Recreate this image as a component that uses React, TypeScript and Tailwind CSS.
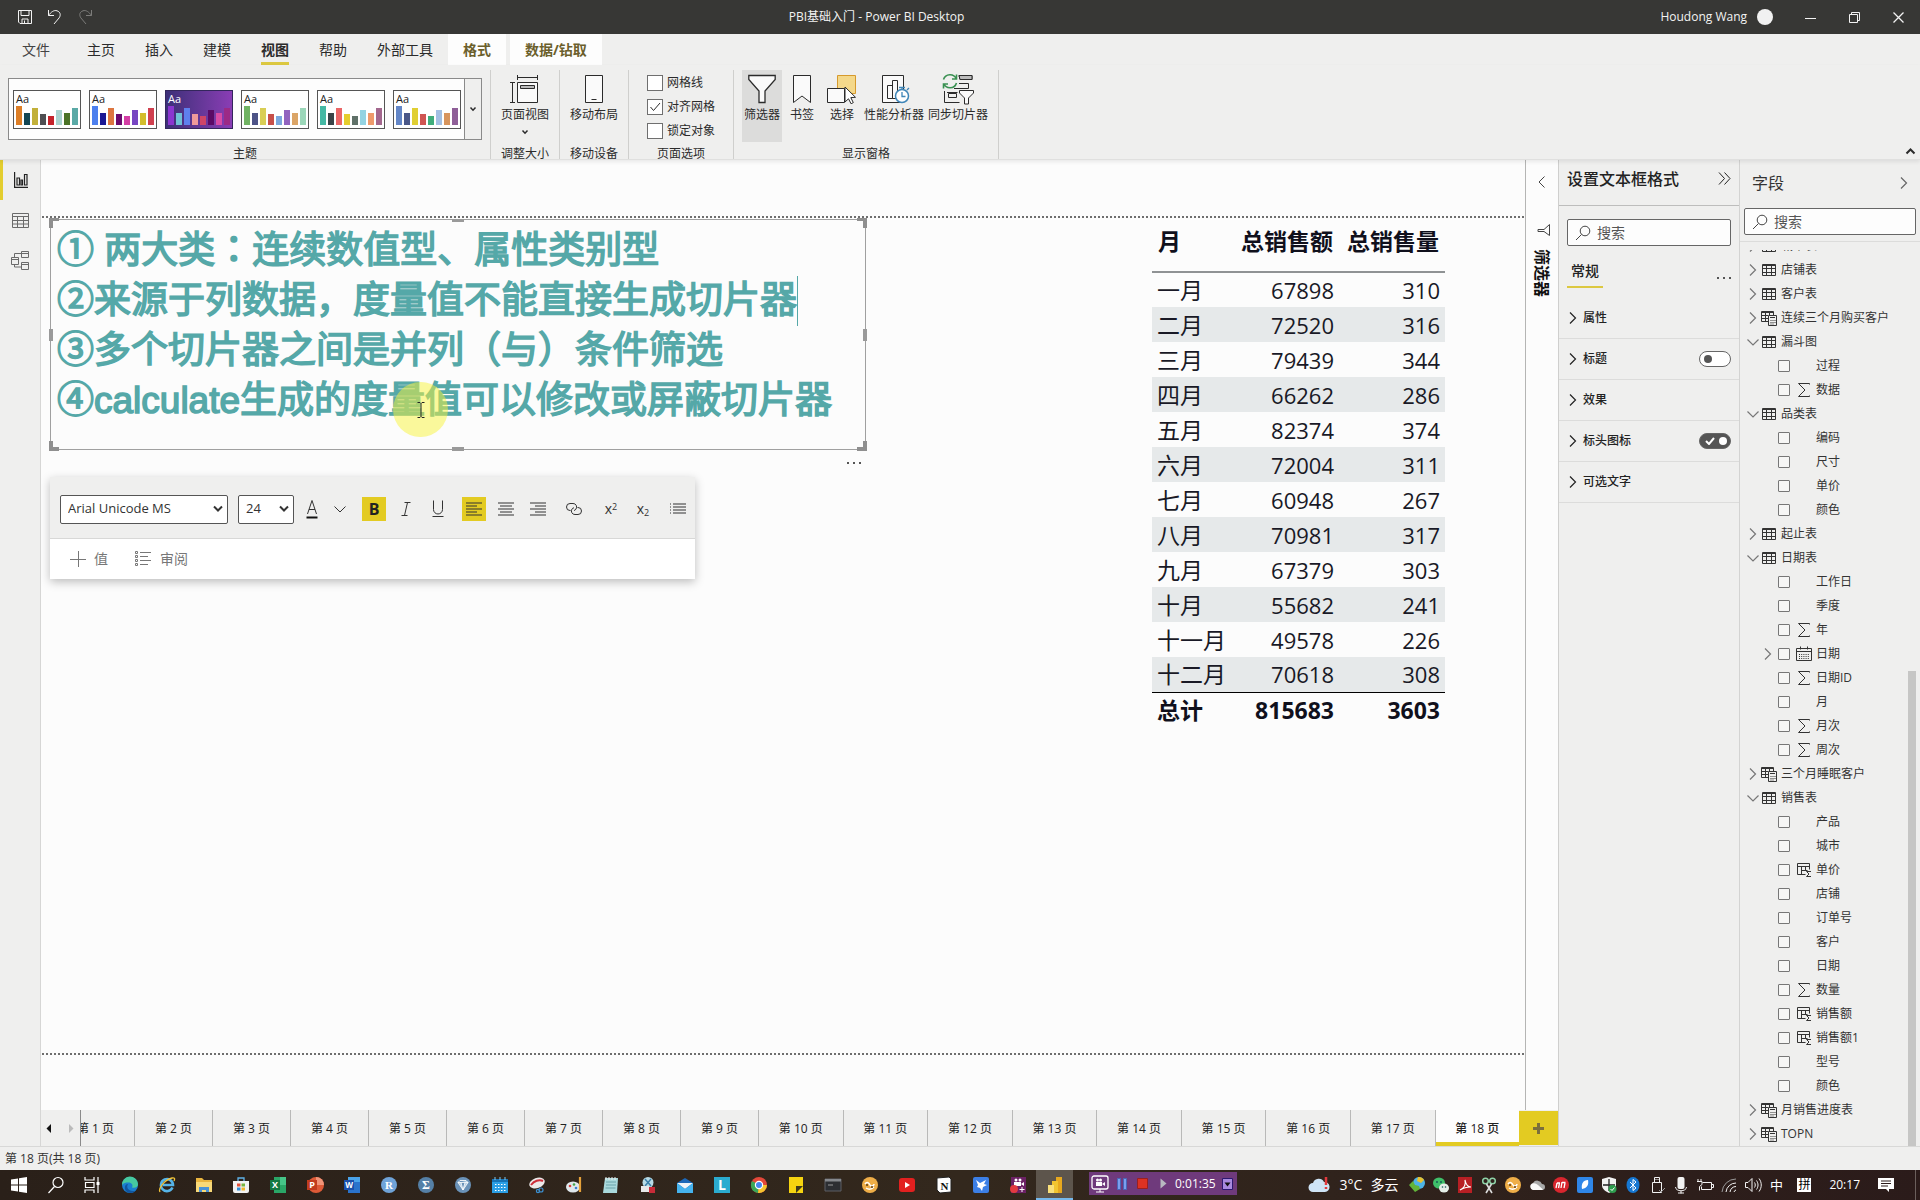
import React from "react";
import type { ReactNode } from "react";

/* ---------- data ---------- */

const BAR_HEIGHTS = [19, 12, 17, 11, 9, 15, 12, 17];

const THEMES = [
  { name: "默认", dark: false, colors: ["#dd7e26", "#134653", "#c2b03a", "#4f4f52", "#c4242b", "#a9d3cf", "#4b7327", "#5aa9a6"] },
  { name: "经典", dark: false, colors: ["#4d80ee", "#1b1894", "#dd7640", "#6a0a6e", "#d43fa5", "#7746c2", "#d3bd2c", "#d0404f"] },
  { name: "紫色", dark: true, colors: ["#8a35d0", "#6fc0d6", "#5f80ee", "#f09a9a", "#ce4568", "#5a0a66", "#d84ba6", "#9c2a86"] },
  { name: "城市公园", dark: false, colors: ["#71b363", "#4d5387", "#d9ce55", "#c7504a", "#7ba8dd", "#9264bf", "#dba567", "#9bd7b9"] },
  { name: "教室", dark: false, colors: ["#44b8a4", "#3a4347", "#ea6566", "#e5cd2d", "#607169", "#94d3e2", "#ee9a6c", "#a3678e"] },
  { name: "彩色", dark: false, colors: ["#6386c7", "#4a5788", "#e0cf33", "#cf5552", "#40ad7c", "#a3c0e4", "#d7955e", "#8f5f98"] },
];

const TABLE_ROWS = [
  ["一月", "67898", "310"],
  ["二月", "72520", "316"],
  ["三月", "79439", "344"],
  ["四月", "66262", "286"],
  ["五月", "82374", "374"],
  ["六月", "72004", "311"],
  ["七月", "60948", "267"],
  ["八月", "70981", "317"],
  ["九月", "67379", "303"],
  ["十月", "55682", "241"],
  ["十一月", "49578", "226"],
  ["十二月", "70618", "308"],
];

type Node = { label: string; kind: "table" | "calc" | "field"; open?: boolean; icon?: "sum" | "date" | "col"; expandable?: boolean };

const TREE: Node[] = [
  { label: "城市表", kind: "table" },
  { label: "店铺表", kind: "table" },
  { label: "客户表", kind: "table" },
  { label: "连续三个月购买客户", kind: "calc" },
  { label: "漏斗图", kind: "table", open: true },
  { label: "过程", kind: "field" },
  { label: "数据", kind: "field", icon: "sum" },
  { label: "品类表", kind: "table", open: true },
  { label: "编码", kind: "field" },
  { label: "尺寸", kind: "field" },
  { label: "单价", kind: "field" },
  { label: "颜色", kind: "field" },
  { label: "起止表", kind: "table" },
  { label: "日期表", kind: "table", open: true },
  { label: "工作日", kind: "field" },
  { label: "季度", kind: "field" },
  { label: "年", kind: "field", icon: "sum" },
  { label: "日期", kind: "field", icon: "date", expandable: true },
  { label: "日期ID", kind: "field", icon: "sum" },
  { label: "月", kind: "field" },
  { label: "月次", kind: "field", icon: "sum" },
  { label: "周次", kind: "field", icon: "sum" },
  { label: "三个月睡眠客户", kind: "calc" },
  { label: "销售表", kind: "table", open: true },
  { label: "产品", kind: "field" },
  { label: "城市", kind: "field" },
  { label: "单价", kind: "field", icon: "col" },
  { label: "店铺", kind: "field" },
  { label: "订单号", kind: "field" },
  { label: "客户", kind: "field" },
  { label: "日期", kind: "field" },
  { label: "数量", kind: "field", icon: "sum" },
  { label: "销售额", kind: "field", icon: "col" },
  { label: "销售额1", kind: "field", icon: "col" },
  { label: "型号", kind: "field" },
  { label: "颜色", kind: "field" },
  { label: "月销售进度表", kind: "calc" },
  { label: "TOPN", kind: "calc" },
];

/* ---------- small icons ---------- */

type IconProps = { w: number; h: number; className?: string; children: ReactNode; sw?: number };

function Icon({ w, h, className = "", children, sw = 1 }: IconProps) {
  return (
    <svg width={w} height={h} viewBox={`0 0 ${w} ${h}`} fill="none" stroke="currentColor" strokeWidth={sw} className={`shrink-0 ${className}`} aria-hidden="true">
      {children}
    </svg>
  );
}

const SearchIcon = ({ className = "" }: { className?: string }) => (
  <Icon w={16} h={16} className={className}>
    <circle cx="10" cy="6" r="4.8" />
    <path d="M6.5 9.5 1 15" />
  </Icon>
);

const ChevronRight = ({ className = "" }: { className?: string }) => (
  <Icon w={14} h={14} sw={1.2} className={className}>
    <path d="M4 1.5 9.5 7 4 12.5" />
  </Icon>
);

const ChevronDown = ({ className = "" }: { className?: string }) => (
  <Icon w={14} h={14} sw={1.2} className={className}>
    <path d="M1.5 4.5 7 10l5.500-5.500" />
  </Icon>
);

const SmallArrow = ({ className = "" }: { className?: string }) => (
  <Icon w={8} h={6} sw={1.5} className={className}>
    <path d="M1.500 1.500 4 4.200l2.500-2.700" />
  </Icon>
);

const TableIcon = () => (
  <Icon w={16} h={16}>
    <path d="M1.500 2.500h13v11h-13zM1.500 3.500h13M1.500 6.500h13M1.500 10.500h13M5.500 3v10.500M10.500 3v10.500" />
  </Icon>
);

const CalcTableIcon = () => (
  <Icon w={16} h={16}>
    <path d="M7 11.500H.5v-10h12v3.500M.5 2.500h12M.5 5.500H7M.5 8.500H7M4.500 2v9.500M8.500 2v3" />
    <path d="M7.500 5.500h8v10h-8z" fill="#efefee" />
    <path d="M9 7.500h5M9.500 10.500h1M11.500 10.500h1M13.500 10.500h1M9.500 12.500h1M11.500 12.500h1M13.500 12.500h1M9.500 14h1M11.500 14h1" />
  </Icon>
);

const SumIcon = () => (
  <Icon w={16} h={16}>
    <path d="M13.500 2.500v-1h-11L9 8l-6.500 6.500h11v-1" />
  </Icon>
);

const DateIcon = () => (
  <Icon w={16} h={16}>
    <path d="M.5 2.500h15v12H.5zM.5 5.500h15M4.500.5v3M11.500.5v3" />
    <path d="M3 8.500h10M3 10.500h10M3 12.500h10" strokeDasharray="1 1.200" />
  </Icon>
);

const ColumnIcon = () => (
  <Icon w={16} h={16}>
    <path d="M9.500 12.500h-8v-11h12v6M1.500 4.500h12M5.500 4.500v8M9.500 4.500v4M5.500 8.500h6" />
    <path d="M15 9.500h-4.500l2.500 2.500-2.500 2.500H15" />
  </Icon>
);

const AlignIcon = ({ rows }: { rows: string }) => (
  <Icon w={16} h={16} sw={1.2}>
    <path d={rows} />
  </Icon>
);

/* ---------- title bar and ribbon ---------- */

function TitleBar() {
  return (
    <header className="flex h-[34px] shrink-0 items-center justify-between bg-[#373735] text-xs text-[#f3f3f3]">
      <div className="flex flex-1 items-center gap-[14px] pl-[17px]">
        <button aria-label="保存">
          <Icon w={16} h={16}><path d="M1.500 1.500h13v13H3l-1.500-1.500zM4 1.500v5h8v-5M5 14.500v-4.500h6v4.500M7.500 11.500v3" /></Icon>
        </button>
        <button aria-label="撤消">
          <Icon w={16} h={16}><path d="M1.500 1v5.500H7M1.500 6.500C4 3 7 .8 10 1.800c3.500 1.200 4 4.200 2.200 7L7 15" /></Icon>
        </button>
        <button aria-label="恢复" className="text-[#7c7c7a]">
          <Icon w={16} h={16}><path d="M14.500 1v5.500H9M14.500 6.500C12 3 9 .8 6 1.800c-3.500 1.200-4 4.200-2.200 7L9 15" /></Icon>
        </button>
      </div>
      <h1 className="pr-42">PBI基础入门 - Power BI Desktop</h1>
      <div className="flex flex-1 items-center justify-end pr-4">
        <span>Houdong Wang</span>
        <span className="ml-[10px] size-4 rounded-full bg-[#f1f1f1]" />
        <div className="ml-8 flex gap-[33px]">
          <button aria-label="最小化"><Icon w={11} h={11}><path d="M0 6.500h11" /></Icon></button>
          <button aria-label="还原"><Icon w={11} h={11}><path d="M.5 2.500h8v8h-8zM2.500 2.500v-2h8v8h-2" /></Icon></button>
          <button aria-label="关闭"><Icon w={11} h={11} sw={1.300}><path d="M.5.5l10 10M10.500.5l-10 10" /></Icon></button>
        </div>
      </div>
    </header>
  );
}

function MenuTabs() {
  return (
    <nav className="flex h-[31px] shrink-0 items-stretch text-sm text-[#2b2b2b]">
      <button className="w-[72px] text-[#444]">文件</button>
      <button className="px-[15px]">主页</button>
      <button className="px-[15px]">插入</button>
      <button className="px-[15px]">建模</button>
      <button className="relative px-[15px] font-bold">
        视图
        <span className="absolute inset-x-[15px] bottom-0 h-[3px] bg-[#dcc840]" />
      </button>
      <button className="px-[15px]">帮助</button>
      <button className="px-[15px]">外部工具</button>
      <button className="bg-[#fdfdfd] px-[15px] font-bold text-[#6b5f2c]">格式</button>
      <button className="ml-1 bg-[#fdfdfd] px-[15px] font-bold text-[#6b5f2c]">数据/钻取</button>
    </nav>
  );
}

function RibbonGroup({ title, children, className = "" }: { title: string; children: ReactNode; className?: string }) {
  return (
    <section className={`flex flex-col justify-between border-r border-[#cfcfcd] ${className}`}>
      {children}
      <h2 className="text-center leading-[11px]">{title}</h2>
    </section>
  );
}

function RibbonButton({ label, icon, wide = false, active = false, arrow = false }: { label: string; icon: ReactNode; wide?: boolean; active?: boolean; arrow?: boolean }) {
  return (
    <button className={`flex h-[72px] flex-col items-center whitespace-nowrap pt-[3px] ${wide ? "w-16" : "w-10"} ${active ? "bg-[#dcdcdb]" : ""}`}>
      <span className="flex h-[32px] items-center">{icon}</span>
      <span className="pt-px leading-[18px]">{label}</span>
      {arrow && <SmallArrow className="mt-[5px]" />}
    </button>
  );
}

function OptionBox({ label, checked = false }: { label: string; checked?: boolean }) {
  return (
    <label className="flex h-6 items-center gap-1">
      <span className="grid size-4 place-items-center">
        <input type="checkbox" defaultChecked={checked} className="peer col-start-1 row-start-1 size-4 appearance-none border border-[#6f6f6f] bg-white" />
        {checked && (
          <Icon w={12} h={12} className="pointer-events-none col-start-1 row-start-1"><path d="M1.500 6 4.500 9.500 11 2" /></Icon>
        )}
      </span>
      {label}
    </label>
  );
}

function Ribbon() {
  return (
    <div className="relative z-10 flex h-[95px] shrink-0 items-stretch border-b border-[#e0e0df] pt-[5px] text-xs text-[#2b2b2b] shadow-[0_2px_4px_rgba(0,0,0,0.08)]">
      <RibbonGroup title="主题" className="w-[491px]">
        <div className="mt-2 ml-2 flex h-[62px] w-[474px] border border-[#8a8a8a] bg-[#fdfdfd]">
          <div className="flex flex-1 items-center gap-2 pl-1">
            {THEMES.map((t) => (
              <button
                key={t.name}
                aria-label={t.name}
                className={`flex h-[39px] w-[68px] flex-col justify-between border pb-[3px] ${t.dark ? "border-[#33265c] bg-linear-to-r from-[#3c2f78] to-[#8a3db5] text-white" : "border-[#555] bg-white text-[#222]"}`}
              >
                <span className="pl-[2px] text-left text-[11px] leading-[15px]">Aa</span>
                <span className="flex h-5 items-end gap-[2px] pl-[2px]">
                  {t.colors.map((c, i) => (
                    <i key={c} className="w-[6px]" style={{ height: BAR_HEIGHTS[i], backgroundColor: c }} />
                  ))}
                </span>
              </button>
            ))}
          </div>
          <button aria-label="更多主题" className="grid w-[17px] place-items-center border-l border-[#8a8a8a] bg-[#efefee]">
            <SmallArrow />
          </button>
        </div>
      </RibbonGroup>
      <RibbonGroup title="调整大小" className="w-[69px] items-center">
        <RibbonButton wide arrow label="页面视图" icon={
          <Icon w={30} h={30} className="mr-[2px]">
            <path d="M8.500 1v5M28.500 1v5M8.500 3.500h20M1 8.500h5M1 28.500h5M3.500 8.500v20" />
            <path d="M8.500 8.500h20v20h-20z" fill="#fafafa" /><path d="M11.500 11.500h14v3h-14z" fill="#bbb" />
          </Icon>
        } />
      </RibbonGroup>
      <RibbonGroup title="移动设备" className="w-[69px] items-center">
        <RibbonButton wide label="移动布局" icon={<Icon w={18} h={30}><path d="M.5 1.500h17v27H.5z" fill="#fafafa" /><path d="M6.500 25.500h5" /></Icon>} />
      </RibbonGroup>
      <RibbonGroup title="页面选项" className="w-[105px]">
        <div className="pt-px pl-[18px]">
          <OptionBox label="网格线" />
          <OptionBox label="对齐网格" checked />
          <OptionBox label="锁定对象" />
        </div>
      </RibbonGroup>
      <RibbonGroup title="显示窗格" className="w-[265px]">
        <div className="flex pl-2">
          <RibbonButton active label="筛选器" icon={<Icon w={28} h={30} sw={1.300}><path d="M.8 1.500h26.400v4L17 17v11.500h-6V17L.8 5.500z" fill="#fafafa" /></Icon>} />
          <RibbonButton label="书签" icon={<Icon w={18} h={30}><path d="M.5 1.500h17v27L9 22 .5 28.500z" fill="#fafafa" /></Icon>} />
          <RibbonButton label="选择" icon={
            <Icon w={30} h={30}>
              <path d="M10.500 1.500h18v18h-18z" fill="#f4d88a" stroke="#d69a2d" />
              <path d="M.5 14.500h17v14H.5z" fill="#fafafa" />
              <path d="M18 13v15l3.500-3.200 2.600 5 2.200-1.200-2.500-5 4.700-.3z" fill="#fff" />
            </Icon>
          } />
          <RibbonButton wide label="性能分析器" icon={
            <Icon w={28} h={30} className="ml-1">
              <path d="M.5 1.500h21v27H.5z" fill="#fafafa" /><path d="M5.500 24.500v-13h5v13zM10.500 24.500v-18h5v18z" />
              <circle cx="20" cy="22" r="6.500" fill="#fff" stroke="#3f86b8" strokeWidth="1.500" />
              <path d="M20 15.500v-2M17 13.500h6M25 16l2-2M20 18v4.500h3.500" stroke="#3f86b8" strokeWidth="1.300" />
            </Icon>
          } />
          <RibbonButton wide label="同步切片器" icon={
            <Icon w={32} h={32}>
              <path d="M17 2.500h13v4H18zM17 10.500h9.500v5H12M5 19.500h10.500M2.500 18v11.500h15M6.500 20.500h8v4h-8z" />
              <path d="M17 2.500h13v4H18z" fill="#bbb" />
              <path d="M1.500 6.500a6.800 6.800 0 0 1 12.800-.5M14.500 1.500V6h-4.500M14.500 10a6.800 6.800 0 0 1-12.800.5M1.500 15.500V11H6" stroke="#3a9152" strokeWidth="1.600" />
              <path d="M17.500 17.500h14v2.500l-5 5v6h-4v-6l-5-5z" fill="#fafafa" />
            </Icon>
          } />
        </div>
      </RibbonGroup>
      <button aria-label="折叠功能区" className="mt-auto mr-1 mb-1 ml-auto">
        <Icon w={11} h={8} sw={2}><path d="M1.500 6.500l4-4 4 4" /></Icon>
      </button>
    </div>
  );
}

/* ---------- canvas ---------- */

function LeftRail() {
  return (
    <nav className="flex w-[41px] shrink-0 flex-col border-r border-[#d6d6d5] text-[#6a6a6a]">
      <button aria-label="报表" className="flex h-10 items-center border-l-[3px] border-[#e3cd2e] pl-[11px] text-[#222]">
        <Icon w={14} h={16} sw={1.200}><path d="M.6 0v15.400H14M3 6v7h2.500V6zM7 8v5h1.500V8zM10.500 2.500V13h2.500V2.500z" /></Icon>
      </button>
      <button aria-label="数据" className="grid h-10 place-items-center">
        <Icon w={17} h={17}><path d="M.5 1.500h16v14H.5zM.5 4.500h16M.5 8.500h16M.5 12h16M5.500 4.500v11M11.500 4.500v11" /></Icon>
      </button>
      <button aria-label="模型" className="grid h-10 place-items-center">
        <Icon w={18} h={19}><path d="M10.500.5h7v6h-7zM10.500 2.500h7M.5 6.500h7v7h-7zM.5 8.500h7M10.500 11.500h7v7h-7zM10.500 13.500h7M3.500 6.500v-4h7M3.500 13.500v2.500h7" /></Icon>
      </button>
    </nav>
  );
}

const DOTTED = "h-[2px] bg-[repeating-linear-gradient(90deg,#6e6e6e_0_2px,transparent_2px_4px)]";

function TextVisual() {
  return (
    <div className="absolute top-[59px] left-[9px] h-[231px] w-[816px] border border-[#a0a0a0] pt-[6px] pl-[6px]">
      <div className="font-['Liberation_Sans','Noto_Sans_CJK_SC',sans-serif] text-[37px] leading-[50px] whitespace-nowrap text-[#55a8a8] [-webkit-text-stroke:1.500px_#55a8a8]">
        <p>① 两大类<span lang="zh-TW" className="font-['Noto_Sans_CJK_TC',sans-serif] leading-none">：</span>连续数值型、属性类别型</p>
        <p className="flex items-center">②来源于列数据，度量值不能直接生成切片器<i className="h-[50px] w-px bg-[#55a8a8]" /></p>
        <p>③多个切片器之间是并列（与）条件筛选</p>
        <p>④calculate生成的度量值可以修改或屏蔽切片器</p>
      </div>
      <i className="absolute -top-[2px] -left-[2px] size-[10px] border-t-[3px] border-l-[4px] border-[#8f8f8f]" />
      <i className="absolute -top-[2px] -right-[2px] size-[10px] border-t-[3px] border-r-[4px] border-[#8f8f8f]" />
      <i className="absolute -bottom-[2px] -left-[2px] size-[10px] border-b-[4px] border-l-[4px] border-[#8f8f8f]" />
      <i className="absolute -right-[2px] -bottom-[2px] size-[10px] border-r-[4px] border-b-[4px] border-[#8f8f8f]" />
      <i className="absolute -top-[1px] left-1/2 h-[3px] w-3 -translate-x-1/2 bg-[#9a9a9a]" />
      <i className="absolute -bottom-[2px] left-1/2 h-1 w-3 -translate-x-1/2 bg-[#9a9a9a]" />
      <i className="absolute top-1/2 -left-[2px] h-3 w-1 -translate-y-1/2 bg-[#9a9a9a]" />
      <i className="absolute top-1/2 -right-[2px] h-3 w-1 -translate-y-1/2 bg-[#9a9a9a]" />
      <span className="absolute top-[162px] left-[342px] grid size-[55px] place-items-center rounded-full bg-[#f7f43a]/50 text-[#222]">
        <Icon w={8} h={16}><path d="M.5.5H3l1 1 1-1h2.500M4 1.500v13M.5 15.500H3l1-1 1 1h2.500" /></Icon>
      </span>
      <button aria-label="更多选项" className="absolute right-0 -bottom-[19px] flex gap-1 p-1">
        <i className="size-[2px] bg-[#555]" /><i className="size-[2px] bg-[#555]" /><i className="size-[2px] bg-[#555]" />
      </button>
    </div>
  );
}

function FormatSelect({ label, value, options, className }: { label: string; value: string; options: string[]; className: string }) {
  return (
    <div className={`grid items-center ${className}`}>
      <select aria-label={label} defaultValue={value} className="col-start-1 row-start-1 h-[29px] w-full appearance-none rounded-xs border border-[#555] bg-white pl-[7px] text-[13px] text-[#333]">
        {options.map((o) => <option key={o}>{o}</option>)}
      </select>
      <Icon w={10} h={8} sw={2} className="pointer-events-none col-start-1 row-start-1 mr-[5px] justify-self-end text-[#333]"><path d="M1 1.500l4 4 4-4" /></Icon>
    </div>
  );
}

function FormatToolbar() {
  const cell = "grid h-6 w-6 place-items-center";
  return (
    <div className="absolute top-[317px] left-[9px] w-[645px] bg-white text-[#333] shadow-[0_3px_9px_rgba(0,0,0,0.25)]">
      <div className="flex h-[62px] items-center border-b border-[#d8d8d7] bg-[#efefee] pt-[3px] pl-[10px]">
        <FormatSelect label="字体" value="Arial Unicode MS" options={["Arial Unicode MS", "Arial", "DIN", "Segoe UI"]} className="w-[168px]" />
        <FormatSelect label="字号" value="24" options={["20", "24", "28", "32"]} className="ml-[10px] w-[56px]" />
        <button aria-label="字体颜色" className={`${cell} ml-[6px]`}>
          <Icon w={12} h={20}><path d="M1.500 15 6 1.500 10.500 15M3 10.500h6" /><path d="M.5 18.500h11" stroke="#111" strokeWidth="2" /></Icon>
        </button>
        <button aria-label="选择颜色" className={`${cell} ml-1`}><Icon w={12} h={8}><path d="M.5 1.500 6 7l5.500-5.500" /></Icon></button>
        <button aria-label="加粗" className={`${cell} ml-[10px] bg-[#e3cb22] text-base font-bold text-[#222]`}>B</button>
        <button aria-label="斜体" className={`${cell} ml-2`}><Icon w={10} h={14}><path d="M3.500.5h6M.5 13.500h6M6.500.5l-3 13" /></Icon></button>
        <button aria-label="下划线" className={`${cell} ml-2`}><Icon w={12} h={18}><path d="M1.500.5v9a4.500 4.500 0 0 0 9 0v-9M.5 16.500h11" /></Icon></button>
        <button aria-label="左对齐" className={`${cell} ml-[12px] bg-[#e3cb22]`}><AlignIcon rows="M0 2h16M0 5h11M0 8h16M0 11h11M0 14h16" /></button>
        <button aria-label="居中" className={`${cell} ml-2`}><AlignIcon rows="M0 2h16M2 5h12M0 8h16M2 11h12M0 14h16" /></button>
        <button aria-label="右对齐" className={`${cell} ml-2`}><AlignIcon rows="M0 2h16M5 5h11M0 8h16M5 11h11M0 14h16" /></button>
        <button aria-label="链接" className={`${cell} ml-3`}>
          <Icon w={18} h={14}><path d="M5.500 8.500H5a3.500 3.500 0 0 1 0-7h3a3.500 3.500 0 0 1 3 5.500M12.500 5.500h.5a3.500 3.500 0 0 1 0 7h-3a3.500 3.500 0 0 1-3-5.500c.4-.7 1-1 2-1.200M11 7c-.4.700-1 1.300-2 1.500" /></Icon>
        </button>
        <button aria-label="上标" className={`${cell} ml-[13px] text-sm`}><span>x<sup className="text-[9px]">2</sup></span></button>
        <button aria-label="下标" className={`${cell} ml-2 text-sm`}><span>x<sub className="text-[9px]">2</sub></span></button>
        <button aria-label="项目符号" className={`${cell} ml-[11px]`}><AlignIcon rows="M3 3h13M3 6h13M3 9h13M3 12h13M0 3h1M0 6h1M0 9h1M0 12h1" /></button>
      </div>
      <div className="flex h-[40px] items-center gap-[27px] pl-5 text-sm text-[#777]">
        <button className="flex items-center gap-2"><Icon w={16} h={16}><path d="M8.500 0v16M0 8.500h16" /></Icon>值</button>
        <button className="flex items-center gap-[9px]">
          <Icon w={16} h={16}><path d="M.5.500h2v2h-2zM.5 4.500h2v2h-2zM.5 8.500h2v2h-2zM.5 12.500h2v2h-2zM5 1.500h11M5 5.500h8M5 9.500h11M5 13.500h8" /></Icon>审阅
        </button>
      </div>
    </div>
  );
}

function SalesTable() {
  return (
    <table className="absolute top-[62px] left-[1111px] w-[293px] border-collapse text-[22px] text-[#191926]">
      <thead className="text-[23px] text-[#10101c]">
        <tr className="h-[50px] border-b-2 border-[#8f9294] align-top">
          <th className="w-[83px] px-[6px] pt-[2px] text-left leading-[34px]">月</th>
          <th className="w-[104px] px-[6px] pt-[2px] text-right leading-[34px]">总销售额</th>
          <th className="px-[6px] pt-[2px] text-right leading-[34px]">总销售量</th>
        </tr>
      </thead>
      <tbody>
        {TABLE_ROWS.map(([m, a, b]) => (
          <tr key={m} className="h-[35px] leading-[34px] even:bg-[#e6e9ea]">
            <td className="p-0 pl-[5px] text-[23px]">{m}</td>
            <td className="p-0 pr-[5px] text-right">{a}</td>
            <td className="p-0 pr-[5px] text-right">{b}</td>
          </tr>
        ))}
      </tbody>
      <tfoot className="border-t border-black text-[23px] font-bold text-[#10101c]">
        <tr className="h-[35px] leading-[34px]">
          <td className="p-0 pl-[5px]">总计</td>
          <td className="p-0 pr-[5px] text-right">815683</td>
          <td className="p-0 pr-[5px] text-right">3603</td>
        </tr>
      </tfoot>
    </table>
  );
}

function PageTabs() {
  const pages = Array.from({ length: 18 }, (_, i) => i + 1);
  return (
    <div className="flex h-[36px] shrink-0 bg-[#efefee] text-xs text-[#222]">
      <div className="flex w-[40px] shrink-0 items-center justify-between border-r border-[#8a8a8a] pr-[6px] pl-[5px]">
        <button aria-label="上一页"><Icon w={5} h={9}><path d="M5 0v9L.5 4.500z" fill="#111" stroke="none" /></Icon></button>
        <button aria-label="下一页"><Icon w={5} h={9}><path d="M0 0v9l4.500-4.500z" fill="#bbb" stroke="none" /></Icon></button>
      </div>
      <div className="flex min-w-0 flex-1 overflow-hidden">
        {pages.map((n) =>
          n === 18 ? (
            <button key={n} className="flex-1 border-b-4 border-[#e3cb22] bg-[#fdfdfd] pt-[5px] font-medium whitespace-nowrap">第 {n} 页</button>
          ) : (
            <button key={n} className={`border-r border-[#b9b9b8] pt-px whitespace-nowrap ${n === 1 ? "-ml-6" : ""} ${n < 10 ? "w-[78px] shrink-0" : "flex-1"}`}>第 {n} 页</button>
          )
        )}
      </div>
      <button aria-label="新建页" className="my-px grid w-[39px] shrink-0 place-items-center bg-[#e3cb22] text-[#7b6f3c]">
        <Icon w={11} h={11} sw={3}><path d="M5.500 0v11M0 5.500h11" /></Icon>
      </button>
    </div>
  );
}

function Workspace() {
  return (
    <div className="flex min-w-0 flex-1 flex-col">
      <div className="flex min-h-0 flex-1 bg-[#fcfcfc]">
        <main className="relative flex flex-1 flex-col justify-between overflow-hidden pt-[56px] pb-[55px] pl-px">
          <div className={DOTTED} />
          <div className={DOTTED} />
          <TextVisual />
          <FormatToolbar />
          <SalesTable />
        </main>
        <aside className="flex w-[33px] flex-col items-center border-l border-[#b5b5b4] text-[#444]">
          <button aria-label="展开筛选器" className="mt-[15px]"><Icon w={14} h={14}><path d="M9.500 1.500 4 7l5.500 5.500" /></Icon></button>
          <Icon w={14} h={14} className="mt-[34px] ml-1"><path d="M12.500 1.500v11L7 8.500H1v-2h6z" /></Icon>
          <h2 className="mt-3 text-base leading-5 font-bold text-[#111] [writing-mode:vertical-rl] [text-orientation:sideways]">筛选器</h2>
        </aside>
      </div>
      <PageTabs />
    </div>
  );
}

/* ---------- right panes ---------- */

function SearchBox({ id }: { id: string }) {
  return (
    <div className="flex h-[27px] items-center gap-[6px] rounded-xs border border-[#666] bg-[#fdfdfd] pl-[7px] text-[#444]">
      <SearchIcon />
      <input id={id} aria-label="搜索" placeholder="搜索" className="w-full min-w-0 bg-transparent text-sm outline-none placeholder:text-[#555]" />
    </div>
  );
}

function Toggle({ on, label }: { on: boolean; label: string }) {
  return (
    <span className="grid items-center">
      <input
        type="checkbox"
        role="switch"
        aria-label={label}
        defaultChecked={on}
        className="col-start-1 row-start-1 h-4 w-8 appearance-none rounded-full border border-[#666] bg-white checked:bg-[#555]"
      />
      <span className={`pointer-events-none col-start-1 row-start-1 flex items-center gap-1 ${on ? "justify-self-end pr-1 text-white" : "pl-[5px] text-[#555]"}`}>
        {on && <Icon w={10} h={8} sw={2}><path d="M1 4l3 3 5-6" /></Icon>}
        <i className="size-2 rounded-full bg-current" />
      </span>
    </span>
  );
}

function FormatPane() {
  const rows: { label: string; toggle?: boolean }[] = [
    { label: "属性" },
    { label: "标题", toggle: false },
    { label: "效果" },
    { label: "标头图标", toggle: true },
    { label: "可选文字" },
  ];
  return (
    <aside className="flex w-[181px] shrink-0 flex-col border-l border-[#cfcfce] text-[#222]">
      <div className="flex h-[46px] items-center justify-between border-b border-[#bdbdbc] pr-2 pb-2 pl-2">
        <h2 className="text-base font-medium">设置文本框格式</h2>
        <button aria-label="折叠窗格"><Icon w={13} h={13}><path d="M1 .5l5.500 6-5.500 6M6.500.5l5.500 6-5.500 6" /></Icon></button>
      </div>
      <div className="px-2 pt-[13px]"><SearchBox id="format-search" /></div>
      <div className="mt-[14px] flex h-[28px] items-end justify-between pr-2 pl-2">
        <button className="h-[28px] border-b-2 border-[#dcc840] px-1 pb-1 text-sm leading-5 font-medium">常规</button>
        <button aria-label="更多选项" className="mb-[9px] flex gap-1"><i className="size-[2px] bg-[#555]" /><i className="size-[2px] bg-[#555]" /><i className="size-[2px] bg-[#555]" /></button>
      </div>
      <div className="mt-[10px]">
        {rows.map((r) => (
          <div key={r.label} className="flex h-[41px] items-center justify-between border-b border-[#dcdcdb] pr-2 pl-[7px]">
            <button className="flex items-center gap-[3px] text-xs font-medium">
              <ChevronRight />
              {r.label}
            </button>
            {r.toggle !== undefined && <Toggle on={r.toggle} label={r.label} />}
          </div>
        ))}
      </div>
    </aside>
  );
}

function TreeRow({ node }: { node: Node }) {
  if (node.kind !== "field") {
    return (
      <li>
        <button className="flex h-6 items-center pl-[6px]">
          {node.open ? <ChevronDown className="text-[#777]" /> : <ChevronRight className="text-[#777]" />}
          <span className="mr-1 ml-px">{node.kind === "calc" ? <CalcTableIcon /> : <TableIcon />}</span>
          {node.label}
        </button>
      </li>
    );
  }
  return (
    <li className="flex h-6 items-center pl-[21px]">
      <span className="w-[14px]">
        {node.expandable && <button aria-label="展开" className="block"><ChevronRight className="text-[#777]" /></button>}
      </span>
      <label className="ml-[3px] flex items-center">
        <input type="checkbox" className="size-3 appearance-none rounded-[1px] border border-[#777] bg-[#f6f6f5]" />
        <span className="mr-1 ml-[6px] w-4">
          {node.icon === "sum" && <SumIcon />}
          {node.icon === "date" && <DateIcon />}
          {node.icon === "col" && <ColumnIcon />}
        </span>
        {node.label}
      </label>
    </li>
  );
}

function FieldsPane() {
  return (
    <aside className="flex w-[181px] shrink-0 flex-col border-l border-[#d3d3d2] text-[#333]">
      <div className="flex h-12 items-center justify-between pr-[9px] pb-[2px] pl-3">
        <h2 className="text-base">字段</h2>
        <button aria-label="折叠窗格" className="text-[#666]"><ChevronRight /></button>
      </div>
      <div className="pr-1 pl-1"><SearchBox id="field-search" /></div>
      <div className="mt-[6px] flex min-h-0 flex-1 border-t border-[#dcdcdb] pt-2">
        <div className="min-w-0 flex-1 overflow-hidden">
          <ul className="-mt-4 text-xs whitespace-nowrap">
            {TREE.map((n, i) => <TreeRow key={i} node={n} />)}
          </ul>
        </div>
        <div className="mr-1 flex w-2 flex-col justify-end"><div className="h-[53%] bg-[#c6c6c5]" /></div>
      </div>
    </aside>
  );
}

/* ---------- taskbar ---------- */

function Glyph({ children }: { children: ReactNode }) {
  return <svg width="18" height="18" viewBox="0 0 18 18" fill="none" aria-hidden="true">{children}</svg>;
}

function Letter({ x, y = 13, size = 10, fill = "#fff", serif = false, children }: { x: number; y?: number; size?: number; fill?: string; serif?: boolean; children: string }) {
  return (
    <text x={x} y={y} fontSize={size} fill={fill} textAnchor="middle" fontWeight="bold" fontFamily={serif ? "Liberation Serif, serif" : "Open Sans, sans-serif"}>
      {children}
    </text>
  );
}

const Lion = () => (
  <Glyph><circle cx="9" cy="9" r="8" fill="#efae48" /><path d="M4 8c2-3 4-1 5 1s4 1 4-1M5 12c3 2 6 1 8-1" stroke="#fff" strokeWidth="1.500" /><circle cx="6" cy="9" r="1" fill="#5c3a12" /><circle cx="11" cy="11" r="1" fill="#5c3a12" /></Glyph>
);

const APPS: { name: string; icon: ReactNode }[] = [
  { name: "开始", icon: <Glyph><path d="M1 3.500l7-1v6H1zM9 2.300 17 1v7.500H9zM1 9.500h7v6l-7-1zM9 9.500h8V17l-8-1.300z" fill="#fff" /></Glyph> },
  { name: "搜索", icon: <Glyph><circle cx="11" cy="6.500" r="5" stroke="#fff" strokeWidth="1.200" /><path d="M7.500 10.500 1.500 17" stroke="#fff" strokeWidth="1.200" /></Glyph> },
  { name: "任务视图", icon: <Glyph><path d="M1 1v3h9V1M1 17v-3h9v3M1.500 6.500h8.500v5H1.500zM14 1v5M14 9v8" stroke="#fff" strokeWidth="1.200" /><path d="M12.500 6h3v3h-3z" fill="#fff" /></Glyph> },
  { name: "Edge", icon: <Glyph><circle cx="9" cy="9" r="8" fill="#1b7fd0" /><path d="M1 9a8 8 0 0 1 16-1c.3 3-3 4.500-6 3.500 1.500-2.500-.5-5-3.500-5S2.500 7 1 9z" fill="#46c9a0" /><path d="M7 8c-2 3 0 7 5 7 1 0 2 0 3-1-2 3-6 4-9 2S3 8 7 8z" fill="#10559f" /></Glyph> },
  { name: "Internet Explorer", icon: <Glyph><path d="M14.500 11.500A6 6 0 1 1 15 9H5" stroke="#56b4e8" strokeWidth="2.600" /><path d="M2 16C0 13 6 4 14 2c3-.5 3 1 2 3" stroke="#f0c33a" strokeWidth="1.300" /></Glyph> },
  { name: "文件资源管理器", icon: <Glyph><path d="M1 2h6l2 2h8v12H1z" fill="#e9b53f" /><path d="M1 6h16v10H1z" fill="#f8d978" /><path d="M4 16v-5h10v5h-3v-2H7v2z" fill="#4a93d6" /></Glyph> },
  { name: "Microsoft Store", icon: <Glyph><path d="M6 5V2h6v3" stroke="#5fb3e8" strokeWidth="1.300" /><path d="M1 5h16v10a2 2 0 0 1-2 2H3a2 2 0 0 1-2-2z" fill="#f2f2f2" /><path d="M5 7.500h3.500v3H5z" fill="#e2513a" /><path d="M9.500 7.500H13v3H9.500z" fill="#77b43f" /><path d="M5 11.500h3.500v3H5z" fill="#2f8fd8" /><path d="M9.500 11.500H13v3H9.500z" fill="#f2b62c" /></Glyph> },
  { name: "Excel", icon: <Glyph><path d="M5 1h12v16H5z" fill="#2aa667" /><path d="M11 1h6v8h-6z" fill="#46c588" /><path d="M1 4h10v10H1z" fill="#137a43" /><Letter x={6} y={12} size={9}>X</Letter></Glyph> },
  { name: "PowerPoint", icon: <Glyph><circle cx="10" cy="9" r="8" fill="#dd5a37" /><path d="M10 1a8 8 0 0 1 8 8h-8z" fill="#f09478" /><path d="M1 4h10v10H1z" fill="#c13c1e" /><Letter x={6} y={12} size={9}>P</Letter></Glyph> },
  { name: "Word", icon: <Glyph><path d="M5 1h12v16H5z" fill="#2a73cc" /><path d="M5 1h12v5H5z" fill="#4aa3ea" /><path d="M1 4h10v10H1z" fill="#1a50ad" /><Letter x={6} y={12} size={8}>W</Letter></Glyph> },
  { name: "RStudio", icon: <Glyph><circle cx="9" cy="9" r="8" fill="#6fa3d8" /><Letter x={9} y={13} size={11} serif>R</Letter></Glyph> },
  { name: "SPSS", icon: <Glyph><circle cx="9" cy="9" r="8" fill="#5580a6" /><Letter x={9} y={13} size={12} serif>Σ</Letter></Glyph> },
  { name: "Modeler", icon: <Glyph><circle cx="9" cy="9" r="8" fill="#6a92b8" /><path d="M4 6.500h10L9 14zM6 4.500h6l2 2M4 6.500l2-2M7 6.500 9 14l2-7.500" stroke="#fff" fill="#b6d0e6" strokeWidth=".8" /></Glyph> },
  { name: "日历", icon: <Glyph><path d="M1 3h16v14H1z" fill="#2b9fe6" /><path d="M1 3h16v3H1z" fill="#1673b6" /><path d="M4 1v3M9 1v3M14 1v3" stroke="#7cc8f2" /><path d="M4 8.500h11M4 11.500h11M4 14.500h11" stroke="#fff" strokeDasharray="1.500 1.500" /></Glyph> },
  { name: "截图工具", icon: <Glyph><ellipse cx="9" cy="7" rx="8" ry="5" transform="rotate(-20 9 7)" fill="#ece9ea" /><path d="M3 9c3-4 8-6 12-4" stroke="#cc2d3a" strokeWidth="2" /><circle cx="13" cy="14" r="2" stroke="#3c8fd0" strokeWidth="1.200" /><circle cx="10" cy="15" r="1.600" stroke="#3c8fd0" strokeWidth="1.200" /></Glyph> },
  { name: "画图", icon: <Glyph><ellipse cx="8" cy="11" rx="7" ry="5.500" fill="#dfe8ec" /><circle cx="5" cy="10" r="1.300" fill="#d8413e" /><circle cx="9" cy="8.500" r="1.300" fill="#45a54c" /><circle cx="11" cy="12" r="1.300" fill="#3c7ed2" /><path d="M15 1v15" stroke="#e5a13a" strokeWidth="2.200" /></Glyph> },
  { name: "记事本", icon: <Glyph><path d="M3 2h13l-1 15H1z" fill="#a9d9dc" /><path d="M4 6h10M4 9h10M3.500 12h10" stroke="#6aa4aa" /><path d="M4 1v3M7 1v3M10 1v3M13 1v3" stroke="#eee" /></Glyph> },
  { name: "远程工具", icon: <Glyph><circle cx="9" cy="6.500" r="5.500" fill="#b7dbe6" /><path d="M6 3l6 7M12 3 6 10" stroke="#3b7fa8" strokeWidth="1.500" /><path d="M2 10h8v6H2z" fill="#e8e8e8" /><path d="M10 11h6v6h-6z" fill="#c82b38" /></Glyph> },
  { name: "邮件", icon: <Glyph><path d="M1 7l8-5 8 5v9H1z" fill="#1d68b8" /><path d="M1 7h16l-8 6z" fill="#f0f4f8" /><path d="M1 7l8 6 8-6v10H1z" fill="#45b3ee" /></Glyph> },
  { name: "Listary", icon: <Glyph><path d="M1 1h16v16H1z" fill="#2bacd0" /><Letter x={9} y={14} size={14}>L</Letter></Glyph> },
  { name: "Chrome", icon: <Glyph><circle cx="9" cy="9" r="8" fill="#e4483a" /><path d="M9 9 2 5a8 8 0 0 0 6 12z" fill="#3aa757" /><path d="M9 9h8a8 8 0 0 1-9 8z" fill="#f6c52f" /><circle cx="9" cy="9" r="3.600" fill="#4687ee" stroke="#fff" strokeWidth="1.200" /></Glyph> },
  { name: "便笺", icon: <Glyph><path d="M2 1h14v16H2z" fill="#f6d410" /><path d="M9 17V10h7z" fill="#3f3a1c" /></Glyph> },
  { name: "终端", icon: <Glyph><path d="M1 3h16v12H1z" fill="#2c2e32" stroke="#5c5f64" /><path d="M1 3h16v2.500H1z" fill="#85888d" /><path d="M4 9h5" stroke="#999" /></Glyph> },
  { name: "狮子", icon: <Lion /> },
  { name: "YouTube", icon: <Glyph><rect x="1" y="2" width="16" height="14" rx="3" fill="#e2201f" /><path d="M7 6l5 3-5 3z" fill="#fff" /></Glyph> },
  { name: "Notion", icon: <Glyph><path d="M2 2l12-1 2 2v13l-11 1-3-3z" fill="#fff" stroke="#222" /><Letter x={9.500} y={14} size={11} fill="#111" serif>N</Letter></Glyph> },
  { name: "飞鸟", icon: <Glyph><rect x="1" y="1" width="16" height="16" rx="2" fill="#3c7fe6" /><path d="M4 4l4 3 6-3-2 4 3 1-4 2-1 4-2-3-3-1 1-2z" fill="#fff" /></Glyph> },
  { name: "录屏", icon: <Glyph><path d="M2 1h15v16H2z" fill="#6c2266" /><path d="M5 6h7v4H5zM12 8l3-2v4z" fill="#fff" /><circle cx="7" cy="4" r="1.500" fill="#fff" /><circle cx="11" cy="4" r="1.500" fill="#fff" /><circle cx="5" cy="13" r="4" fill="#e23a40" /><path d="M13 11v5M10.500 13.500h5" stroke="#fff" /></Glyph> },
];

const W = "#f2f2f2";
const TRAY: { name: string; icon: ReactNode }[] = [
  { name: "下载管理", icon: <Glyph><circle cx="11" cy="7" r="6" fill="#4db3e6" /><path d="M10 1a6 6 0 0 1 6 3l-3 3-4-2z" fill="#e8c22e" /><path d="M1 9l4-4 2 4 4 1 1 3-5 3z" fill="#62b43a" /></Glyph> },
  { name: "微信", icon: <Glyph><ellipse cx="7" cy="7" rx="6" ry="5.500" fill="#3fc069" /><ellipse cx="12" cy="12" rx="5" ry="4.500" fill="#e6efe8" /><circle cx="5" cy="6" r=".9" fill="#155" /><circle cx="9" cy="6" r=".9" fill="#155" /><circle cx="10.500" cy="11" r=".8" fill="#155" /><circle cx="13.500" cy="11" r=".8" fill="#155" /></Glyph> },
  { name: "PDF", icon: <Glyph><path d="M2 1h14v16H2z" fill="#b81f24" /><path d="M4 14c4-2 6-6 5-10 1 5 3 7 6 7-4 0-8 1-11 3z" stroke="#fff" strokeWidth="1.200" /></Glyph> },
  { name: "剪刀", icon: <Glyph><circle cx="5.500" cy="5" r="2.800" stroke="#8fd3a8" strokeWidth="1.500" /><circle cx="12.500" cy="5" r="2.800" stroke="#8fd3a8" strokeWidth="1.500" /><path d="M6.500 8 12 17M11.500 8 6 17" stroke="#ddd" strokeWidth="1.600" /></Glyph> },
  { name: "狮子", icon: <Lion /> },
  { name: "OneDrive", icon: <Glyph><path d="M5 14a4 4 0 0 1 0-7 5 5 0 0 1 9 1 3 3 0 0 1 0 6z" fill="#a9a9a9" /><path d="M5 14a3.500 3.500 0 0 1-1-6.500 6 6 0 0 1 6 1.500l5 4.500-1 .5z" fill="#fafafa" /></Glyph> },
  { name: "惠普", icon: <Glyph><circle cx="9" cy="9" r="8" fill="#d9262e" /><path d="M4 12l1-5M6.500 12l1-5M9 12l1-6M12 12l1-5M5 7h3M10 6.500h3.500" stroke="#fff" strokeWidth="1.300" /></Glyph> },
  { name: "蓝色助手", icon: <Glyph><rect x="1" y="1" width="16" height="16" rx="2" fill="#2f86e8" /><path d="M6 13c-1-5 1-9 6-9 1 5-1 8-6 9z" fill="#fff" /></Glyph> },
  { name: "安全中心", icon: <Glyph><path d="M9 1l7 2v6c0 4-3 6-7 8-4-2-7-4-7-8V3z" fill={W} /><path d="M9 3v12M3 9h12" stroke="#222" strokeWidth="1.300" /><circle cx="12.500" cy="13" r="4" fill="#2f9e4f" /><path d="M10.500 13l1.500 1.500 2.500-3" stroke="#fff" /></Glyph> },
  { name: "蓝牙", icon: <Glyph><ellipse cx="9" cy="9" rx="6.500" ry="8" fill="#1677d2" /><path d="M6 6l6 6-3 2.500v-11L12 6l-6 6" stroke="#fff" /></Glyph> },
  { name: "USB", icon: <Glyph><path d="M6.500 1.500h5v5h-5zM4.500 6.500h9v10h-9zM8 3v1M10 3v1" stroke={W} /><path d="M11 14l2 2 4-4" stroke="#999" /></Glyph> },
  { name: "麦克风", icon: <Glyph><rect x="5.500" y="1" width="7" height="12" rx="2" fill={W} /><path d="M3.500 11c0 5 11 5 11 0M9 15v2.500M6 17h6" stroke={W} /></Glyph> },
  { name: "电池", icon: <Glyph><path d="M6.500 6.500h9v7H5.500v-3M16 8.500h1.500v3H16M2 3v3M5 3v3M1 5.500h5v3l-2.500 2v4" stroke={W} /></Glyph> },
  { name: "网络", icon: <Glyph><path d="M2 16A14 14 0 0 1 16 3" stroke="#999" /><path d="M6 16A10 10 0 0 1 16 7M10 16a6 6 0 0 1 6-5.500M14 16a3 3 0 0 1 2-2" stroke={W} /></Glyph> },
  { name: "音量", icon: <Glyph><path d="M1.500 6.500H4l4-4v13l-4-4H1.500zM10.500 6.500c1 1.500 1 3.500 0 5M12.500 4.500c2 3 2 6 0 9M15 2.500c3 4 3 9 0 13" stroke={W} /></Glyph> },
];

function Taskbar() {
  return (
    <footer className="flex h-[30px] shrink-0 items-stretch bg-linear-to-r from-[#2a2019] via-[#33281d] to-[#2b1b1a] text-white">
      {APPS.map((a) => (
        <button key={a.name} aria-label={a.name} className="grid w-[37px] shrink-0 place-items-center">{a.icon}</button>
      ))}
      <button aria-label="Power BI Desktop" className="grid w-[37px] shrink-0 place-items-center border-b-2 border-[#76b9ed] bg-[#5d554c] pt-[2px]">
        <Glyph><path d="M10 1h6v16h-6z" fill="#e7a81e" /><path d="M6 5h6v12H6z" fill="#f2c52f" /><path d="M2 9h6v8H2z" fill="#f9e07a" /></Glyph>
      </button>
      <div className="mt-[2px] mb-[5px] ml-4 flex w-[148px] items-center bg-[#6f3a7c] text-xs">
        <button aria-label="录像" className="ml-[2px]">
          <Glyph><rect x="1" y="1" width="16" height="13" rx="2" stroke="#fff" strokeWidth="1.300" /><path d="M5 7h6v4H5zM11 9l3-2v4z" fill="#fff" /><circle cx="6.500" cy="5" r="1.500" fill="#fff" /><circle cx="9.500" cy="5" r="1.500" fill="#fff" /><path d="M9 14v3M5 17h8" stroke="#fff" /></Glyph>
        </button>
        <button aria-label="暂停" className="ml-2"><Icon w={10} h={12}><path d="M.5.500h3v11h-3zM6.500.500h3v11h-3z" fill="#7aa0ee" stroke="#4868b8" /></Icon></button>
        <button aria-label="停止" className="ml-[10px]"><Icon w={11} h={11}><path d="M.5.500h10v10H.5z" fill="#dd3223" stroke="#9a2020" /></Icon></button>
        <button aria-label="继续" className="ml-3"><Icon w={7} h={11}><path d="M.5.500v10l6-5z" fill="#b8b8c0" stroke="none" /></Icon></button>
        <span className="ml-2">0:01:35</span>
        <button aria-label="菜单" className="ml-[6px]"><Icon w={11} h={12}><path d="M.5.500h10v11H.5z" fill="#a98ae0" stroke="#2c1870" /><path d="M2.500 4.500h6l-3 4z" fill="#111" stroke="none" /></Icon></button>
      </div>
      <div className="ml-auto flex items-center text-sm">
        <button className="mr-[7px] flex items-center gap-2">
          <Icon w={22} h={18} className="mr-[2px]"><path d="M5 16a4.500 4.500 0 0 1 0-9 6 6 0 0 1 11-1 5 5 0 0 1 1 10z" fill="#cfe4f6" stroke="none" /><path d="M18 1v8M18 11v2" stroke="#e0393e" strokeWidth="2.500" /></Icon>
          <span>3°C</span>
          <span>多云</span>
        </button>
        {TRAY.map((t) => (
          <button key={t.name} aria-label={t.name} className="grid w-6 place-items-center">{t.icon}</button>
        ))}
        <button className="w-[22px] text-[13px]">中</button>
        <button className="ml-[10px] h-[14px] w-[14px] bg-white text-xs leading-[14px] text-black">拼</button>
        <time className="ml-[18px] text-xs">20:17</time>
        <button aria-label="操作中心" className="ml-[18px]">
          <Icon w={16} h={16}><path d="M0 1h16v11h-5v3l-3-3H0z" fill="#fff" stroke="none" /><path d="M3 4h10M3 6.500h10M3 9h7" stroke="#2b1b1a" /></Icon>
        </button>
        <i className="mr-1 ml-[21px] h-[30px] w-px bg-[#6b5f5c]" />
      </div>
    </footer>
  );
}

export default function App() {
  return (
    <div className="flex h-screen flex-col overflow-hidden bg-[#efefee] font-['Open_Sans','Noto_Sans_CJK_SC',sans-serif]">
      <TitleBar />
      <MenuTabs />
      <Ribbon />
      <div className="flex min-h-0 flex-1">
        <LeftRail />
        <Workspace />
        <FormatPane />
        <FieldsPane />
      </div>
      <div className="flex h-6 shrink-0 items-center border-t border-[#d8d8d7] pl-[5px] text-xs text-[#333]">第 18 页(共 18 页)</div>
      <Taskbar />
    </div>
  );
}
